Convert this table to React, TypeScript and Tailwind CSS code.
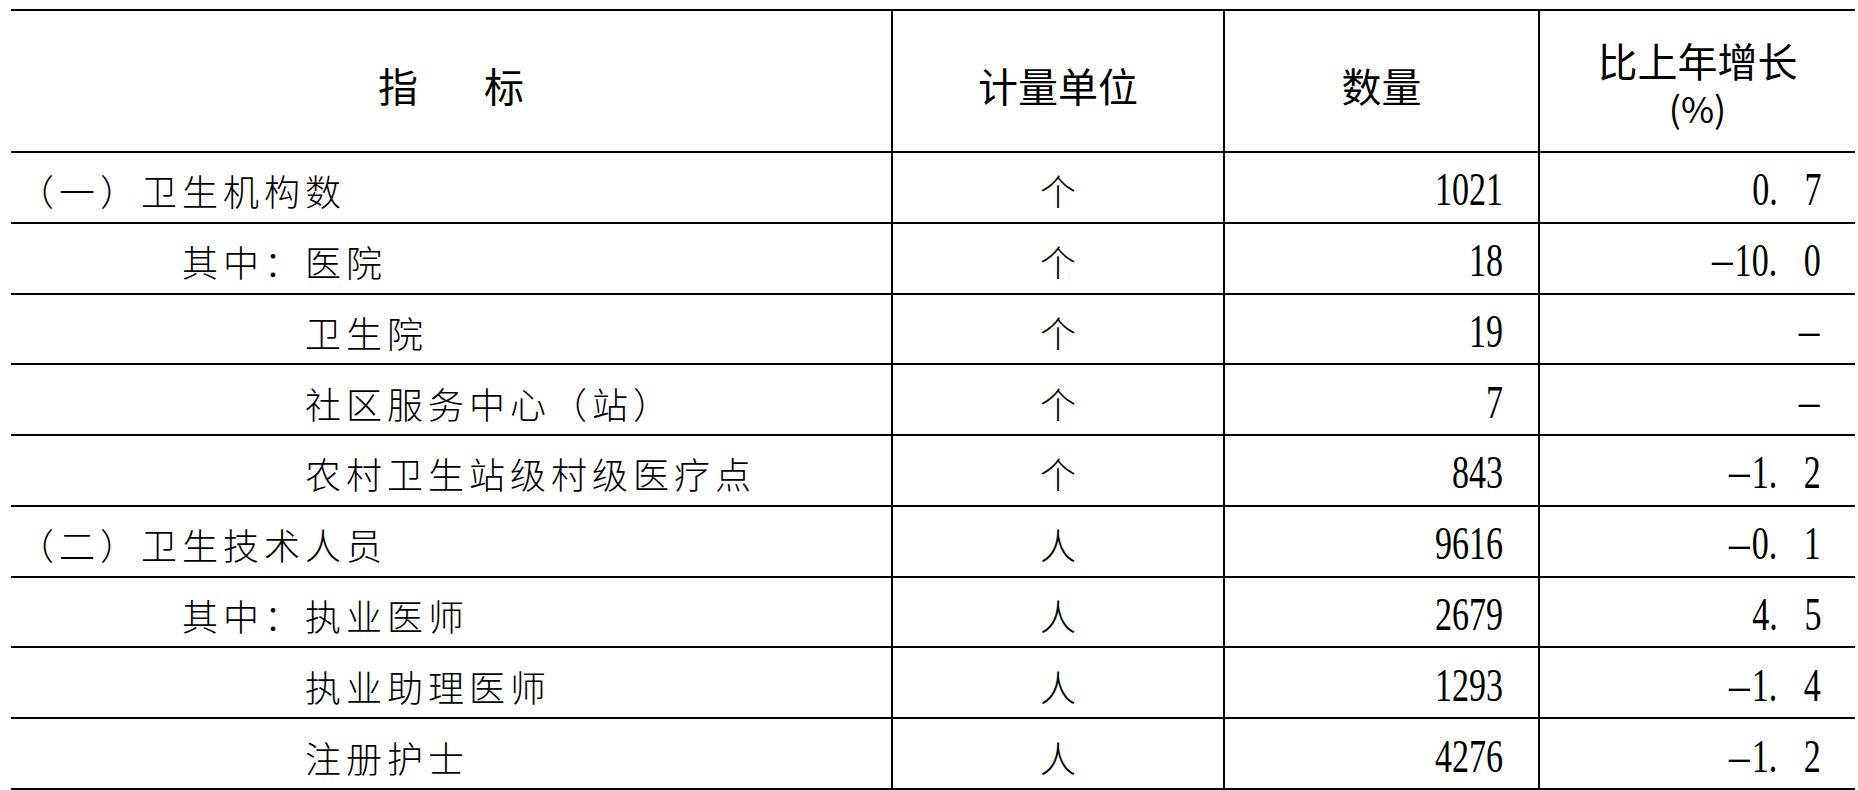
const rows = [
  { name: '（一）卫生机构数', unit: '个', count: '1021', growth: '0.7' },
  { name: '　　　　其中：医院', unit: '个', count: '18', growth: '-10.0' },
  { name: '　　　　　　　卫生院', unit: '个', count: '19', growth: '-' },
  { name: '　　　　　　　社区服务中心（站）', unit: '个', count: '7', growth: '-' },
  { name: '　　　　　　　农村卫生站级村级医疗点', unit: '个', count: '843', growth: '-1.2' },
  { name: '（二）卫生技术人员', unit: '人', count: '9616', growth: '-0.1' },
  { name: '　　　　其中：执业医师', unit: '人', count: '2679', growth: '4.5' },
  { name: '　　　　　　　执业助理医师', unit: '人', count: '1293', growth: '-1.4' },
  { name: '　　　　　　　注册护士', unit: '人', count: '4276', growth: '-1.2' },
]

const cjk = "font-['Noto_Sans_CJK_SC',sans-serif]"
const num = "font-['Liberation_Serif','Noto_Sans_CJK_SC',serif]"

// narrow half-width figures, like the fangsong digits in the source table
function Num({ value }: { value: string }) {
  return (
    <span className="inline-block origin-right scale-x-[0.74] text-[46px] leading-none whitespace-nowrap">
      {value.split('').map((c, i) => {
        if (c === '.') return <span key={i} className="mr-[36px]">.</span>
        if (c === '-')
          return (
            <span key={i} className="inline-block scale-x-[2.4] scale-y-[0.7] mx-[9px]">
              -
            </span>
          )
        return <span key={i}>{c}</span>
      })}
    </span>
  )
}

export default function App() {
  return (
    <div className="w-[1858px] h-[790px] bg-white overflow-hidden pt-[9px] pl-[11px] text-black">
      <div className="w-[1844px] border-t-2 border-black">
        <div className={`grid grid-cols-[882px_332px_315px_315px] h-[142px] border-b-2 border-black ${cjk}`}>
          <div className="flex items-center justify-center border-r-2 border-black pt-2">
            <span className="text-[40px] tracking-[13px] pl-[13px] leading-none">指　标</span>
          </div>
          <div className="flex items-center justify-center border-r-2 border-black pt-2">
            <span className="text-[40px] leading-none">计量单位</span>
          </div>
          <div className="flex items-center justify-center border-r-2 border-black pt-2">
            <span className="text-[40px] leading-none">数量</span>
          </div>
          <div className="flex flex-col items-center justify-center pt-1">
            <span className="text-[40px] leading-[48px]">比上年增长</span>
            <span className="text-[36px] leading-[46px]">(%)</span>
          </div>
        </div>

        {rows.map((r) => (
          <div
            key={r.name}
            className="grid grid-cols-[882px_332px_315px_315px] h-[70.78px] border-b-2 border-black"
          >
            <div className={`flex items-center border-r-2 border-black pl-[7px] pt-[6px] ${cjk} font-light`}>
              <span className="text-[36px] tracking-[5px] leading-none whitespace-pre">{r.name}</span>
            </div>
            <div className={`flex items-center justify-center border-r-2 border-black pt-[6px] ${cjk} font-light`}>
              <span className="text-[36px] leading-none">{r.unit}</span>
            </div>
            <div className={`flex items-center justify-end border-r-2 border-black pr-[35px] pt-[6px] ${num}`}>
              <Num value={r.count} />
            </div>
            <div className={`flex items-center justify-end pr-[34px] pt-[6px] ${num}`}>
              <Num value={r.growth} />
            </div>
          </div>
        ))}
      </div>
    </div>
  )
}
